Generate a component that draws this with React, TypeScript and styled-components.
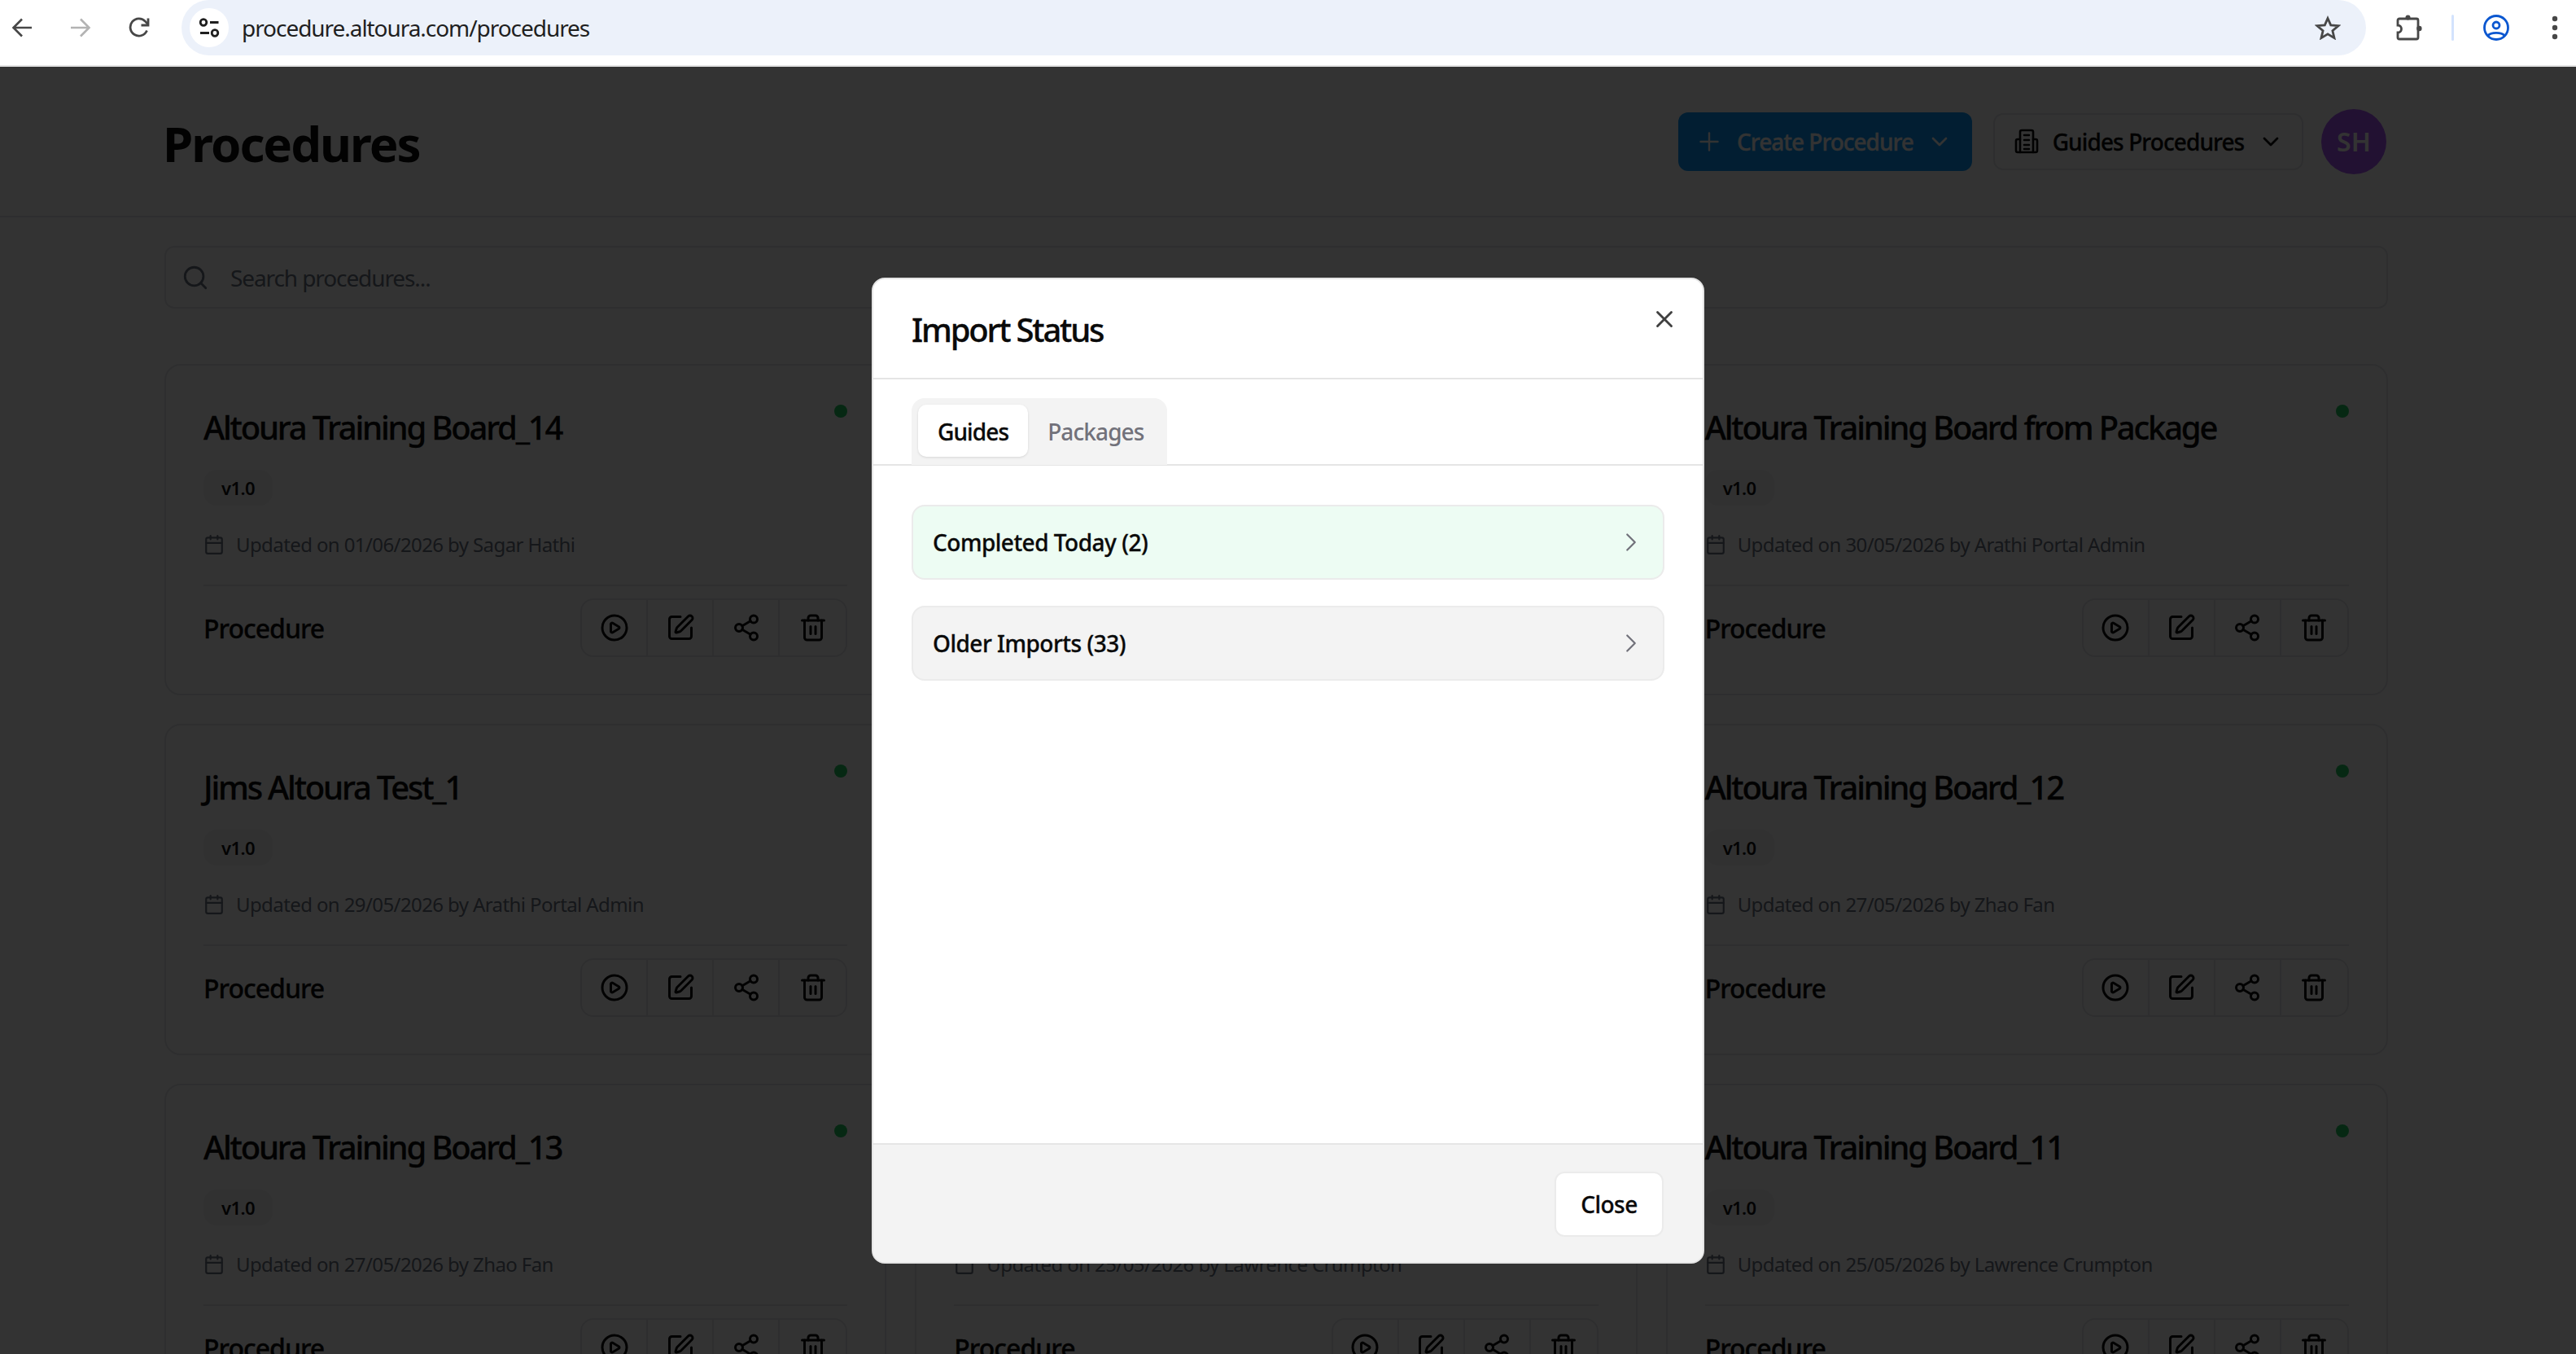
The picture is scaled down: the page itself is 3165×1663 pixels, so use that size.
import styled, { createGlobalStyle } from "styled-components";
import {
  Calendar,
  ChevronDown,
  ChevronRight,
  CirclePlay,
  Plus,
  Search,
  Share2,
  SquarePen,
  Trash2,
  X,
} from "lucide-react";

const FONT = `"Noto Sans", "Open Sans", sans-serif`;

const GlobalStyle = createGlobalStyle`
  html, body {
    margin: 0;
    padding: 0;
    height: 1663px;
    overflow: hidden;
    background: #fff;
    font-family: ${FONT};
    color: #111;
  }
  * { box-sizing: border-box; }
`;

type CardData = { title: string; date: string; author: string };

const cards: CardData[] = [
  { title: "Altoura Training Board_14", date: "01/06/2026", author: "Sagar Hathi" },
  { title: "Altoura Training Board_15", date: "31/05/2026", author: "Lawrence Crumpton" },
  { title: "Altoura Training Board from Package", date: "30/05/2026", author: "Arathi Portal Admin" },
  { title: "Jims Altoura Test_1", date: "29/05/2026", author: "Arathi Portal Admin" },
  { title: "Altoura Training Board_16", date: "28/05/2026", author: "Zhao Fan" },
  { title: "Altoura Training Board_12", date: "27/05/2026", author: "Zhao Fan" },
  { title: "Altoura Training Board_13", date: "27/05/2026", author: "Zhao Fan" },
  { title: "Altoura Training Board_10", date: "25/05/2026", author: "Lawrence Crumpton" },
  { title: "Altoura Training Board_11", date: "25/05/2026", author: "Lawrence Crumpton" },
];

function BackIcon({ color }: { color: string }) {
  return (
    <svg width="26" height="24" viewBox="0 0 26 24" fill="none" stroke={color} strokeWidth="2.6">
      <path d="M25 12H3M13 1.5 2.5 12 13 22.5" />
    </svg>
  );
}

function ForwardIcon({ color }: { color: string }) {
  return (
    <svg width="26" height="24" viewBox="0 0 26 24" fill="none" stroke={color} strokeWidth="2.6">
      <path d="M1 12h22M13 1.5 23.5 12 13 22.5" />
    </svg>
  );
}

function ReloadIcon() {
  return (
    <svg width="26" height="26" viewBox="0 0 26 26" fill="none" stroke="#474747" strokeWidth="2.8">
      <path d="M22.5 16.5A10.6 10.6 0 1 1 20.6 5.4L24 9" />
      <path d="M24 1.5V10h-8.5" />
    </svg>
  );
}

function TuneIcon() {
  return (
    <svg width="48" height="48" viewBox="0 0 48 48" fill="none" stroke="#1f1f1f" strokeWidth="2.8">
      <circle cx="17" cy="17.5" r="3.8" />
      <path d="M25 17.5h10.5M13 30.5h11" />
      <circle cx="31" cy="30.5" r="3.8" />
    </svg>
  );
}

function StarIcon() {
  return (
    <svg width="32" height="30" viewBox="0 0 32 30" fill="none" stroke="#474747" strokeWidth="2.8">
      <path d="M16 3.5l3.7 8.4 9.2.8-7 6 2.1 8.9L16 22.9l-8 4.7 2.1-8.9-7-6 9.2-.8z" />
    </svg>
  );
}

function PuzzleIcon() {
  return (
    <svg width="32" height="32" viewBox="0 0 32 32" stroke="#474747" strokeWidth="2.8">
      <path fill="none" d="M2 7a2 2 0 0 1 2-2h21a2 2 0 0 1 2 2v21a2 2 0 0 1-2 2H4a2 2 0 0 1-2-2v-6a4.5 4.5 0 0 0 0-9z" />
      <circle cx="14.5" cy="3.4" r="3" fill="#474747" strokeWidth="0" />
      <circle cx="28.4" cy="17" r="3.2" fill="#474747" strokeWidth="0" />
    </svg>
  );
}

function ProfileIcon() {
  return (
    <svg width="32" height="32" viewBox="0 0 32 32" fill="none" stroke="#0b57d0" strokeWidth="2.8">
      <circle cx="16" cy="16" r="14.5" />
      <circle cx="16" cy="13" r="4" />
      <path d="M5.5 26c4-4.8 17-4.8 21 0" />
    </svg>
  );
}

function MenuIcon() {
  return (
    <svg width="8" height="32" viewBox="0 0 8 32" fill="#474747">
      <circle cx="4" cy="5" r="3.2" />
      <circle cx="4" cy="16" r="3.2" />
      <circle cx="4" cy="27" r="3.2" />
    </svg>
  );
}

function GuidesIcon() {
  return (
    <svg width="30" height="32" viewBox="0 0 30 32" fill="none" stroke="#0a0a0a" strokeWidth="2.6" strokeLinecap="round" strokeLinejoin="round">
      <path d="M7 29V4a2 2 0 0 1 2-2h12a2 2 0 0 1 2 2v25" />
      <path d="M7 13H4a2 2 0 0 0-2 2v12a2 2 0 0 0 2 2h22a2 2 0 0 0 2-2V15a2 2 0 0 0-2-2h-3" />
      <path d="M12 8h6M12 14h6M12 20h6M12 25h6" />
    </svg>
  );
}

export default function App() {
  return (
    <>
      <GlobalStyle />
      <BrowserBar>
        <NavIcons>
          <BackIcon color="#474747" />
          <ForwardIcon color="#b3b3b3" />
          <ReloadIcon />
        </NavIcons>
        <UrlPill>
          <SiteBadge>
            <TuneIcon />
          </SiteBadge>
          <UrlText>procedure.altoura.com/procedures</UrlText>
          <StarSlot>
            <StarIcon />
          </StarSlot>
        </UrlPill>
        <BrowserTools>
          <PuzzleIcon />
          <ToolDivider />
          <ProfileIcon />
          <MenuIcon />
        </BrowserTools>
      </BrowserBar>

      <Viewport>
        <PageHeader>
          <PageTitle>Procedures</PageTitle>
          <HeaderActions>
            <PrimaryButton>
              <Plus size={36} strokeWidth={1.6} />
              <span>Create Procedure</span>
              <ChevronDown size={32} strokeWidth={2} />
            </PrimaryButton>
            <OutlineButton>
              <GuidesIcon />
              <span>Guides Procedures</span>
              <ChevronDown size={32} strokeWidth={2} />
            </OutlineButton>
            <Avatar>SH</Avatar>
          </HeaderActions>
        </PageHeader>

        <Content>
          <SearchBox>
            <Search size={34} strokeWidth={2} />
            <SearchText>Search procedures...</SearchText>
          </SearchBox>
          <CardGrid>
            {cards.map((card) => (
              <Card key={card.title}>
                <StatusDot />
                <CardTitle>{card.title}</CardTitle>
                <Version>v1.0</Version>
                <Updated>
                  <Calendar size={26} strokeWidth={2} />
                  <span>
                    Updated on {card.date} by {card.author}
                  </span>
                </Updated>
                <CardFooter>
                  <CardKind>Procedure</CardKind>
                  <ActionGroup>
                    <ActionCell>
                      <CirclePlay size={36} strokeWidth={2} />
                    </ActionCell>
                    <ActionCell>
                      <SquarePen size={36} strokeWidth={2} />
                    </ActionCell>
                    <ActionCell>
                      <Share2 size={36} strokeWidth={2} />
                    </ActionCell>
                    <ActionCell>
                      <Trash2 size={36} strokeWidth={2} />
                    </ActionCell>
                  </ActionGroup>
                </CardFooter>
              </Card>
            ))}
          </CardGrid>
        </Content>

        <Overlay>
          <Modal>
            <ModalHeader>
              <ModalTitle>Import Status</ModalTitle>
              <CloseIcon>
                <X size={34} strokeWidth={2} />
              </CloseIcon>
            </ModalHeader>
            <TabsBar>
              <TabList>
                <Tab $active>Guides</Tab>
                <Tab>Packages</Tab>
              </TabList>
            </TabsBar>
            <ModalBody>
              <StatusRow $tone="#edfcf3">
                <span>Completed Today (2)</span>
                <ChevronRight size={38} strokeWidth={1.4} />
              </StatusRow>
              <StatusRow $tone="#f3f3f3">
                <span>Older Imports (33)</span>
                <ChevronRight size={38} strokeWidth={1.4} />
              </StatusRow>
            </ModalBody>
            <ModalFooter>
              <CloseButton>Close</CloseButton>
            </ModalFooter>
          </Modal>
        </Overlay>
      </Viewport>
    </>
  );
}

const BrowserBar = styled.div`
  height: 82px;
  display: flex;
  align-items: flex-start;
  background: #fff;
  border-bottom: 2px solid #e3e3e3;
`;

const NavIcons = styled.div`
  display: flex;
  align-items: center;
  gap: 46px;
  height: 68px;
  padding-left: 14px;
  margin-right: 39px;
`;

const UrlPill = styled.div`
  flex: 1;
  height: 68px;
  display: flex;
  align-items: center;
  gap: 16px;
  padding: 0 31px 0 10px;
  background: #ecf1fa;
  border-radius: 34px;
`;

const SiteBadge = styled.div`
  width: 48px;
  height: 48px;
  border-radius: 50%;
  background: #fff;
  display: flex;
`;

const UrlText = styled.div`
  font-size: 28px;
  letter-spacing: -1.05px;
  color: #1f1f1f;
`;

const StarSlot = styled.div`
  margin-left: auto;
  display: flex;
`;

const BrowserTools = styled.div`
  height: 68px;
  display: flex;
  align-items: center;
  padding-left: 37px;
  padding-right: 22px;
  gap: 36px;
  & > svg:last-child {
    margin-left: 16px;
  }
`;

const ToolDivider = styled.div`
  width: 3px;
  height: 32px;
  border-radius: 2px;
  background: #d3e3fd;
`;

const Viewport = styled.div`
  position: relative;
  height: 1581px;
  overflow: hidden;
`;

const PageHeader = styled.header`
  height: 185px;
  display: flex;
  align-items: center;
  justify-content: space-between;
  padding: 0 233px 0 200px;
  border-bottom: 2px solid #e5e7eb;
`;

const PageTitle = styled.h1`
  margin: 0;
  padding-top: 5px;
  font-size: 60px;
  font-weight: 700;
  letter-spacing: -2px;
  color: #0a0a0a;
`;

const HeaderActions = styled.div`
  display: flex;
  align-items: center;
  gap: 26px;
`;

const PrimaryButton = styled.button`
  height: 72px;
  width: 361px;
  display: flex;
  align-items: center;
  justify-content: space-between;
  padding: 0 24px 0 20px;
  border: 0;
  border-radius: 12px;
  background: #0c98f8;
  color: #fff;
  font: 500 28px ${FONT};
  -webkit-text-stroke: 0.3px currentColor;
  letter-spacing: -1px;
`;

const OutlineButton = styled.button`
  height: 70px;
  width: 381px;
  display: flex;
  align-items: center;
  justify-content: space-between;
  padding: 0 22px 0 24px;
  border: 2px solid #e5e7eb;
  border-radius: 12px;
  background: #fff;
  color: #0a0a0a;
  font: 500 28px ${FONT};
  -webkit-text-stroke: 0.3px currentColor;
  letter-spacing: -0.9px;
`;

const Avatar = styled.div`
  width: 80px;
  height: 80px;
  margin-left: -4px;
  border-radius: 50%;
  background: #a855f7;
  color: #fff;
  font-size: 32px;
  font-weight: 600;
  display: flex;
  align-items: center;
  justify-content: center;
`;

const Content = styled.main`
  padding: 35px 231px 0 202px;
`;

const SearchBox = styled.div`
  height: 77px;
  display: flex;
  align-items: center;
  gap: 26px;
  padding-left: 19px;
  border: 2px solid #e5e7eb;
  border-radius: 12px;
  color: #6b7280;
`;

const SearchText = styled.span`
  font-size: 28px;
  letter-spacing: -1.1px;
`;

const CardGrid = styled.div`
  margin-top: 68px;
  display: grid;
  grid-template-columns: repeat(3, 1fr);
  gap: 35px;
`;

const Card = styled.article`
  position: relative;
  height: 407px;
  padding: 46px 46px 0;
  border: 2px solid #e5e7eb;
  border-radius: 20px;
  background: #fff;
`;

const StatusDot = styled.span`
  position: absolute;
  top: 48px;
  right: 46px;
  width: 16px;
  height: 16px;
  border-radius: 50%;
  background: #22c55e;
`;

const CardTitle = styled.h3`
  margin: 0;
  font-size: 40px;
  line-height: 60px;
  font-weight: 500;
  -webkit-text-stroke: 0.3px currentColor;
  letter-spacing: -2.2px;
  color: #0a0a0a;
`;

const Version = styled.span`
  display: inline-flex;
  align-items: center;
  height: 44px;
  margin-top: 22px;
  padding: 0 22px;
  border-radius: 16px;
  background: #f3f4f6;
  font-size: 22px;
  font-weight: 600;
  letter-spacing: -0.6px;
  color: #111;
`;

const Updated = styled.div`
  display: flex;
  align-items: center;
  gap: 14px;
  margin-top: 31px;
  font-size: 24px;
  letter-spacing: -0.6px;
  color: #6b7280;
`;

const CardFooter = styled.div`
  margin-top: 33px;
  padding-top: 15px;
  border-top: 2px solid #e5e7eb;
  display: flex;
  align-items: center;
  justify-content: space-between;
`;

const CardKind = styled.span`
  padding-top: 1px;
  font-size: 32px;
  font-weight: 500;
  -webkit-text-stroke: 0.3px currentColor;
  letter-spacing: -1px;
  color: #0a0a0a;
`;

const ActionGroup = styled.div`
  display: flex;
  height: 72px;
  border: 2px solid #e5e7eb;
  border-radius: 16px;
`;

const ActionCell = styled.div`
  width: 81px;
  display: flex;
  align-items: center;
  justify-content: center;
  color: #0a0a0a;
  &:not(:last-child) {
    border-right: 2px solid #e5e7eb;
  }
`;

const Overlay = styled.div`
  position: absolute;
  inset: 0;
  display: flex;
  justify-content: center;
  padding-top: 259px;
  background: rgba(0, 0, 0, 0.8);
`;

const Modal = styled.div`
  width: 1023px;
  height: 1211px;
  display: flex;
  flex-direction: column;
  border: 2px solid #e5e5e5;
  border-radius: 16px;
  background: #fff;
  overflow: hidden;
`;

const ModalHeader = styled.div`
  height: 123px;
  flex: none;
  display: flex;
  align-items: flex-start;
  justify-content: space-between;
  padding: 34px 30px 0 47px;
  border-bottom: 2px solid #e5e5e5;
`;

const ModalTitle = styled.h2`
  margin: 0;
  font-size: 40px;
  font-weight: 500;
  -webkit-text-stroke: 0.3px currentColor;
  letter-spacing: -2.2px;
  color: #0a0a0a;
`;

const CloseIcon = styled.div`
  display: flex;
  margin-top: -2px;
  color: #404040;
`;

const TabsBar = styled.div`
  flex: none;
  height: 106px;
  padding: 23px 0 0 47px;
  border-bottom: 2px solid #e5e5e5;
`;

const TabList = styled.div`
  width: 314px;
  height: 82px;
  display: flex;
  gap: 0;
  padding: 8px;
  border-radius: 16px 16px 0 0;
  background: #f3f3f3;
`;

const Tab = styled.div<{ $active?: boolean }>`
  height: 64px;
  padding: 2px 24px 0;
  display: flex;
  align-items: center;
  border-radius: 10px;
  font-size: 28px;
  font-weight: 500;
  -webkit-text-stroke: ${(p) => (p.$active ? "0.3px currentColor" : "0")};
  letter-spacing: -0.9px;
  color: ${(p) => (p.$active ? "#0a0a0a" : "#71717a")};
  background: ${(p) => (p.$active ? "#fff" : "transparent")};
  box-shadow: ${(p) => (p.$active ? "0 1px 3px rgba(0,0,0,0.12)" : "none")};
`;

const ModalBody = styled.div`
  flex: 1;
  display: flex;
  flex-direction: column;
  gap: 32px;
  padding: 48px 47px 0;
`;

const StatusRow = styled.div<{ $tone: string }>`
  height: 92px;
  display: flex;
  align-items: center;
  justify-content: space-between;
  padding: 0 20px 0 24px;
  border: 2px solid #ebebeb;
  border-radius: 16px;
  background: ${(p) => p.$tone};
  font-size: 28px;
  font-weight: 500;
  -webkit-text-stroke: 0.3px currentColor;
  letter-spacing: -0.5px;
  color: #0a0a0a;
  & svg {
    color: #71717a;
    -webkit-text-stroke: 0;
  }
`;

const ModalFooter = styled.div`
  flex: none;
  height: 146px;
  display: flex;
  justify-content: flex-end;
  padding: 33px 48px 0 0;
  border-top: 2px solid #e5e5e5;
  background: #f3f3f3;
`;

const CloseButton = styled.button`
  width: 134px;
  height: 80px;
  border: 2px solid #ebebeb;
  border-radius: 12px;
  background: #fff;
  font: 500 28px ${FONT};
  -webkit-text-stroke: 0.3px currentColor;
  letter-spacing: -0.5px;
  color: #0a0a0a;
`;
